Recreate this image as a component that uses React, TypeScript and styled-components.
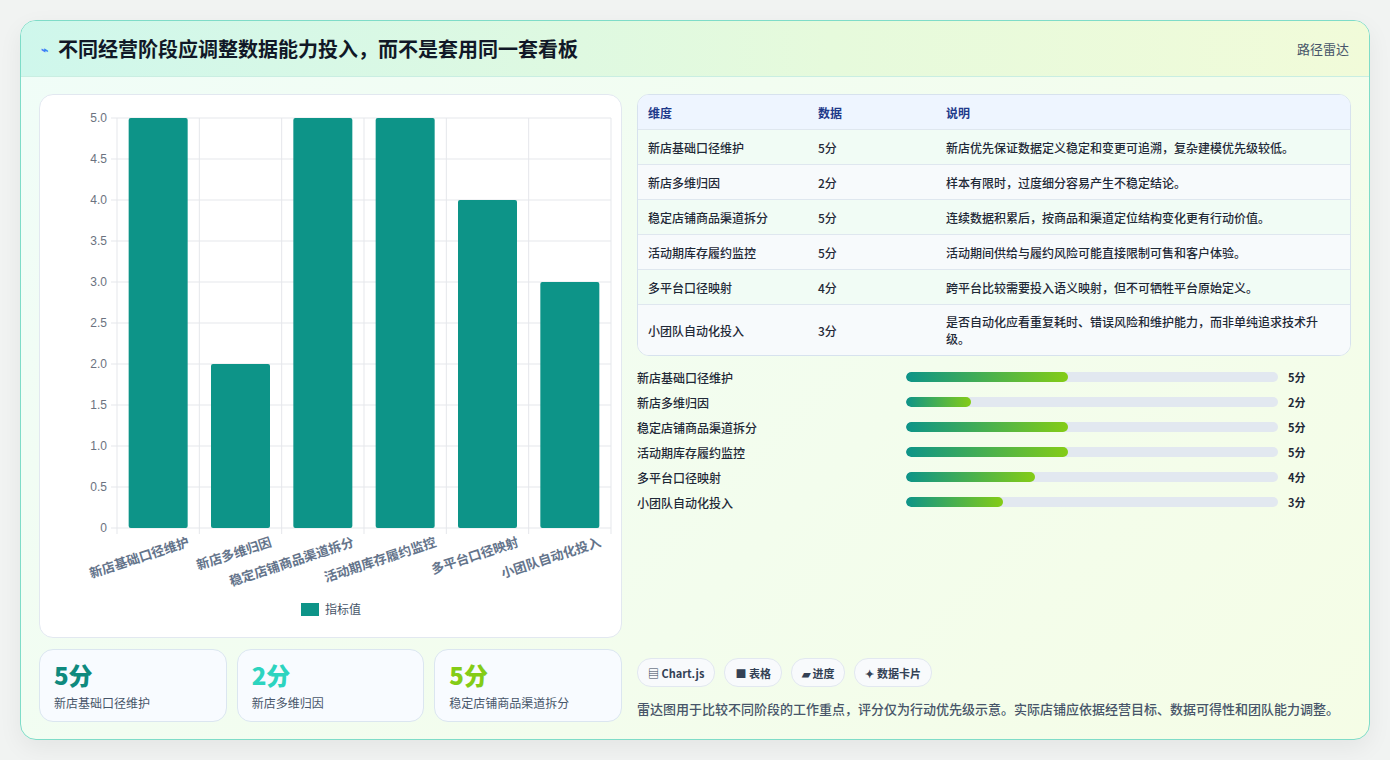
import React from "react";
import styled, { createGlobalStyle } from "styled-components";

const G = createGlobalStyle`
  body{margin:0;background:#f1f3f2;font-family:"Noto Sans CJK SC","Noto Sans",sans-serif;}
`;
const data = [
  { n: "新店基础口径维护", v: 5, d: "新店优先保证数据定义稳定和变更可追溯，复杂建模优先级较低。" },
  { n: "新店多维归因", v: 2, d: "样本有限时，过度细分容易产生不稳定结论。" },
  { n: "稳定店铺商品渠道拆分", v: 5, d: "连续数据积累后，按商品和渠道定位结构变化更有行动价值。" },
  { n: "活动期库存履约监控", v: 5, d: "活动期间供给与履约风险可能直接限制可售和客户体验。" },
  { n: "多平台口径映射", v: 4, d: "跨平台比较需要投入语义映射，但不可牺牲平台原始定义。" },
  { n: "小团队自动化投入", v: 3, d: "是否自动化应看重复耗时、错误风险和维护能力，而非单纯追求技术升级。" },
];
const Page = styled.div`padding:20px 20px 20px 20px;height:760px;box-sizing:border-box;`;
const Card = styled.div`border:1px solid #7fdcc8;border-radius:16px;overflow:hidden;background:linear-gradient(135deg,#f0fdf8,#f5fde6);box-shadow:0 8px 24px rgba(0,0,0,.06);height:720px;box-sizing:border-box;display:flex;flex-direction:column;`;
const Head = styled.div`height:55px;flex:none;display:flex;align-items:center;justify-content:space-between;padding:0 20px;background:linear-gradient(90deg,#cff7ec,#e6fadc 60%,#f1fbd9);border-bottom:1px solid #c9eee2;`;
const Title = styled.h1`margin:0;font-size:20px;font-weight:700;color:#111827;display:flex;align-items:center;gap:10px;`;
const Tag = styled.span`font-size:13px;color:#475569;`;
const Body = styled.div`flex:1;display:grid;grid-template-columns:583px 1fr;gap:15px;padding:17px 18px 18px 18px;`;
const Col = styled.div`display:flex;flex-direction:column;gap:11px;min-height:0;`;
const ChartCard = styled.div`height:544px;background:#fff;border:1px solid #e2e8f0;border-radius:14px;box-sizing:border-box;`;
const Stats = styled.div`display:grid;grid-template-columns:repeat(3,1fr);gap:10px;`;
const Stat = styled.div`height:73px;box-sizing:border-box;border:1px solid #dbe6f0;border-radius:14px;background:#f8fbff;padding:10px 14px;`;
const Big = styled.div<{ c: string }>`font-size:24px;font-weight:800;color:${p => p.c};line-height:30px;`;
const Small = styled.div`font-size:12px;color:#475569;margin-top:4px;`;
const Table = styled.div`border:1px solid #d7e2ee;border-radius:12px;overflow:hidden;background:#fff;`;
const Row = styled.div<{ h?: boolean; alt?: boolean }>`display:grid;grid-template-columns:170px 128px 1fr;padding:0 10px;min-height:34px;align-items:center;font-size:12px;
  color:${p => (p.h ? "#1e3a8a" : "#1f2937")};background:${p => (p.h ? "#eef5ff" : p.alt ? "#f7fafc" : "#f1fcf5")};
  border-top:${p => (p.h ? "none" : "1px solid #dfe7ef")};font-weight:${p => (p.h ? 600 : 500)};
  & > span{padding:8px 0;line-height:17px;}`;
const Bars = styled.div`display:flex;flex-direction:column;gap:7px;margin-top:2px;`;
const BarRow = styled.div`display:grid;grid-template-columns:269px 372px 1fr;align-items:center;font-size:12px;color:#1f2937;font-weight:500;height:18px;`;
const Track = styled.div`height:10px;border-radius:5px;background:#e2e8f0;overflow:hidden;`;
const Fill = styled.div`height:100%;border-radius:5px;background:linear-gradient(90deg,#0d9488,#84cc16);`;
const Val = styled.span`padding-left:10px;font-weight:700;font-size:11px;`;
const Spacer = styled.div`flex:1;`;
const Chips = styled.div`display:flex;gap:9px;`;
const Chip = styled.span`height:27px;padding:0 10px;border:1px solid #e2e8f0;border-radius:14px;background:#f8fafc;font-size:11px;font-weight:700;color:#334155;display:flex;align-items:center;gap:3px;`;
const Note = styled.p`margin:12px 0 4px;font-size:13px;color:#475569;font-weight:500;`;

const Chart = () => {
  const x0 = 77, x1 = 571, yTop = 23, y0 = 433, w = (x1 - x0) / 6;
  const ticks = [0, 0.5, 1, 1.5, 2, 2.5, 3, 3.5, 4, 4.5, 5];
  return (
    <svg width="583" height="544" style={{ display: "block" }}>
      {ticks.map(t => {
        const y = y0 - (t / 5) * (y0 - yTop);
        return (
          <g key={t}>
            <line x1={x0 - 6} x2={x1} y1={y} y2={y} stroke="#e5e7eb" />
            <text x={x0 - 10} y={y + 4} textAnchor="end" fontSize="12" fill="#6b7280" fontFamily="Liberation Sans">{t === 0 ? "0" : t.toFixed(1)}</text>
          </g>
        );
      })}
      {Array.from({ length: 7 }).map((_, i) => (
        <line key={i} x1={x0 + i * w} x2={x0 + i * w} y1={yTop} y2={y0 + 6} stroke="#e5e7eb" />
      ))}
      {data.map((d, i) => {
        const h = (d.v / 5) * (y0 - yTop);
        const cx = x0 + i * w + w / 2;
        return (
          <g key={i}>
            <rect x={cx - 29.5} y={y0 - h} width={59} height={h} rx={2} fill="#0d9488" />
            <text transform={`translate(${cx + 32},${y0 + 18}) rotate(-18)`} textAnchor="end" fontSize="13" fontWeight="600" fill="#64748b">{d.n}</text>
          </g>
        );
      })}
      <rect x={261} y={508} width={18} height={13} fill="#0d9488" />
      <text x={285} y={519} fontSize="12" fill="#475569">指标值</text>
    </svg>
  );
};

export default function App() {
  return (
    <Page>
      <G />
      <Card>
        <Head>
          <Title><span style={{ color: "#3b82f6", fontSize: 12 }}>⌁</span>不同经营阶段应调整数据能力投入，而不是套用同一套看板</Title>
          <Tag>路径雷达</Tag>
        </Head>
        <Body>
          <Col>
            <ChartCard><Chart /></ChartCard>
            <Stats>
              <Stat><Big c="#0f8a7e">5分</Big><Small>新店基础口径维护</Small></Stat>
              <Stat><Big c="#2dd4bf">2分</Big><Small>新店多维归因</Small></Stat>
              <Stat><Big c="#84cc16">5分</Big><Small>稳定店铺商品渠道拆分</Small></Stat>
            </Stats>
          </Col>
          <Col style={{ gap: 0 }}>
            <Table>
              <Row h><span>维度</span><span>数据</span><span>说明</span></Row>
              {data.map((d, i) => (
                <Row key={i} alt={i % 2 === 1}><span>{d.n}</span><span>{d.v}分</span><span>{d.d}</span></Row>
              ))}
            </Table>
            <div style={{ height: 10 }} />
            <Bars>
              {data.map((d, i) => (
                <BarRow key={i}><span>{d.n}</span><Track><Fill style={{ width: `${(d.v / 5) * 43.5}%` }} /></Track><Val>{d.v}分</Val></BarRow>
              ))}
            </Bars>
            <Spacer />
            <Chips>
              <Chip>▤ Chart.js</Chip><Chip>■ 表格</Chip><Chip>▰ 进度</Chip><Chip>✦ 数据卡片</Chip>
            </Chips>
            <Note>雷达图用于比较不同阶段的工作重点，评分仅为行动优先级示意。实际店铺应依据经营目标、数据可得性和团队能力调整。</Note>
          </Col>
        </Body>
      </Card>
    </Page>
  );
}
